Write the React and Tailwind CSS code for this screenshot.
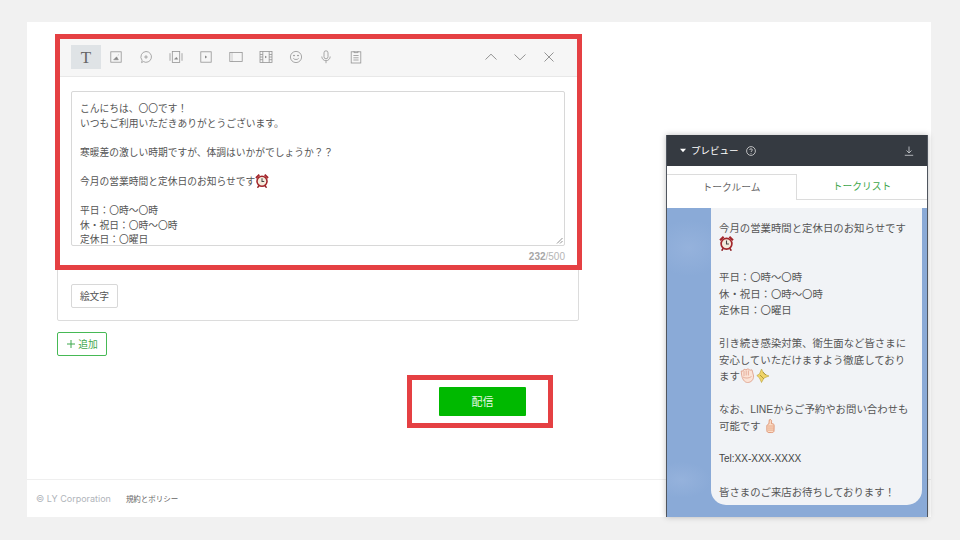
import React from "react";

function Ico({ children, size = 14 }) {
  return (
    <svg width={size} height={size} viewBox="0 0 14 14" fill="none" stroke="#949494" strokeWidth="0.8">
      {children}
    </svg>
  );
}

const tools = [
  <Ico key="1"><rect x="1.8" y="1.8" width="10.4" height="10.4" /><path d="M4.6 9.8 L7.6 6.8 L9.4 9.8Z M8.8 5.4 L9.9 4.6" fill="#888" stroke="#888" strokeWidth=".5" /></Ico>,
  <Ico key="2"><path d="M7 1.5a5.4 5.4 0 1 1-2.6 10.1L2.6 12.6l.5-2.3A5.4 5.4 0 0 1 7 1.5Z" /><path d="M7 5.2v3.6M5.2 7h3.6" /></Ico>,
  <Ico key="3"><rect x="3.3" y="1.5" width="7.4" height="11" /><path d="M1 3.2v7.6M13 3.2v7.6" /><path d="M5.4 9.3 L7.4 7.2 L8.8 9.3Z" fill="#888" stroke="#888" strokeWidth=".4" /></Ico>,
  <Ico key="4"><rect x="1.8" y="1.8" width="10.4" height="10.4" /><path d="M6 5.6 L8.2 7 L6 8.4Z" fill="#888" stroke="none" /></Ico>,
  <Ico key="5"><rect x="0.8" y="2.5" width="12.4" height="9" /><path d="M3 2.5v9" strokeDasharray="1 1" /></Ico>,
  <Ico key="6"><rect x="1" y="1.5" width="12" height="11" /><path d="M3.8 1.5v11M10.2 1.5v11M1 4.5h2.8M1 7h2.8M1 9.7h2.8M10.2 4.5H13M10.2 7H13M10.2 9.7H13" /><path d="M6 5.7 L8 7 L6 8.3Z" fill="#888" stroke="none" /></Ico>,
  <Ico key="7"><circle cx="7" cy="7" r="5.6" /><path d="M4.3 8.3c.8 1.6 4.6 1.6 5.4 0" /><circle cx="5" cy="5.6" r=".5" fill="#888" /><circle cx="9" cy="5.6" r=".5" fill="#888" /></Ico>,
  <Ico key="8"><rect x="5" y="0.8" width="4" height="8" rx="2" /><path d="M2.8 6.5a4.2 4.2 0 0 0 8.4 0M7 10.7v2.5" /></Ico>,
  <Ico key="9"><rect x="2.2" y="1.8" width="9.6" height="11.2" /><path d="M5 1v1.6h4V1M4.4 5.5h5.2M4.4 7.8h5.2M4.4 10h5.2" /></Ico>,
];

function Alarm({ size = 14 }) {
  return (
    <svg className="inline-block align-[-3px]" width={size} height={size} viewBox="1 1 12 12.5">
      <path d="M1 4 L4 1 L5.2 2.2 L2.2 5.2Z M13 4 L10 1 L8.8 2.2 L11.8 5.2Z" fill="#a3262b" />
      <path d="M3 13.3l1.2-2M11 13.3l-1.2-2" stroke="#8f2226" strokeWidth="1.3" />
      <circle cx="7" cy="7.5" r="4.5" fill="#f3ebdc" stroke="#a3262b" strokeWidth="1.4" />
      <path d="M7 4.8V7.7H9" stroke="#444" strokeWidth=".9" fill="none" />
    </svg>
  );
}

function Clap() {
  return (
    <svg className="inline-block align-[-3px]" width="15" height="15" viewBox="0 0 15 15">
      <path d="M1.5 6 L1.2 3 L3 3 L4 1.2 L6 1.8 L8 .8 L10 2.2 L12 1.8 L13.6 8 C13.6 12 11 14.5 7.5 14.5 C4.5 14.5 2 11 1.5 6Z" fill="#fbe3d6" stroke="#dd9a84" strokeWidth=".8" />
      <path d="M4 3v5M6.2 2.5v5M8.4 2.5v5M3 9c2 1.5 6 1.5 8.5-.5" stroke="#dd9a84" strokeWidth=".7" fill="none" />
    </svg>
  );
}

function Sparkle() {
  return (
    <svg className="inline-block align-[-3px] ml-[1px]" width="14" height="15" viewBox="0 0 14 15">
      <path d="M5.5 1 L8 6 L13 8 L8 10 L5.5 14.5 L3.5 10 L.8 7.5 L3.5 6Z" fill="#f0d466" stroke="#b9a13e" strokeWidth=".6" />
      <path d="M7 4 L10 7M4 7 L8 11" stroke="#a58e2d" strokeWidth=".8" />
    </svg>
  );
}

function Thumb() {
  return (
    <svg className="inline-block align-[-4px] ml-[5px]" width="9" height="16" viewBox="0 0 11 18">
      <path d="M4 1.5 C5.5 .5 7 1.5 6.8 3.2 L6.6 6 L9 6.5 C10 7 10 8 10 9 L9.8 15 C9.7 16.5 8.5 17 7 17 L3.5 17 C2 17 1 16 1 14.5 L1 9 C1 7.5 2.5 7 3.5 6.5Z" fill="#fbdcc6" stroke="#d9825c" strokeWidth=".9" />
      <path d="M2 9h7.5M2 11.5h7.5M2 14h7.5" stroke="#d9825c" strokeWidth=".7" />
    </svg>
  );
}

export default function App() {
  return (
    <div
      className="relative w-[960px] h-[540px] overflow-hidden bg-[#f1f1f1] pt-[22px] pl-[27px] text-[#555]"
      style={{ fontFamily: '"Noto Sans CJK JP", "Noto Sans", sans-serif' }}
    >
      <div className="w-[904px] h-[495px] bg-white flex flex-col">
        <main className="flex-1 pl-[30px] pt-[15px]">
          <div className="w-[522px] h-[284px] border border-[#dcdcdc] rounded-[2px]">
            <div className="h-[39px] bg-[#f6f6f6] border-b border-[#e8e8e8] flex items-center pl-[13px] pr-[23px]">
              <div className="w-[30px] h-[24px] bg-[#dfe3e6] flex items-center justify-center text-[#666] text-[17px] font-normal leading-none" style={{ fontFamily: '"Liberation Serif", serif' }}>T</div>
              {tools.map((t) => (
                <div key={t.key} className="w-[30px] h-[24px] flex items-center justify-center">{t}</div>
              ))}
              <div className="flex-1" />
              <div className="flex items-center gap-[17px]">
                <svg width="12" height="12" viewBox="0 0 12 12" fill="none" stroke="#949494"><path d="M.5 8.5 L6 3.2 L11.5 8.5" /></svg>
                <svg width="12" height="12" viewBox="0 0 12 12" fill="none" stroke="#949494"><path d="M.5 3.5 L6 8.8 L11.5 3.5" /></svg>
                <svg width="12" height="12" viewBox="0 0 12 12" fill="none" stroke="#949494"><path d="M1.5 1.5 L10.5 10.5M10.5 1.5 L1.5 10.5" /></svg>
              </div>
            </div>
            <div className="px-[13px] pt-[14px]">
              <div className="relative h-[155px] border border-[#d8d8d8] rounded-[2px] overflow-hidden px-[8px] pt-[9px] text-[9.75px] leading-[14.6px] text-[#555]">
                <div>こんにちは、〇〇です！</div>
                <div>いつもご利用いただきありがとうございます。</div>
                <div className="h-[14.6px]" />
                <div>寒暖差の激しい時期ですが、体調はいかがでしょうか？？</div>
                <div className="h-[14.6px]" />
                <div>今月の営業時間と定休日のお知らせです<Alarm /></div>
                <div className="h-[14.6px]" />
                <div>平日：〇時～〇時</div>
                <div>休・祝日：〇時～〇時</div>
                <div>定休日：〇曜日</div>
                <svg className="absolute right-[1px] bottom-[1px]" width="7" height="7" viewBox="0 0 7 7" stroke="#777" strokeWidth=".8"><path d="M1 6.5 L6.5 1M4 6.5 L6.5 4" /></svg>
              </div>
              <div className="h-[20px] flex items-center justify-end text-[10px] text-[#b5b5b5]" style={{ fontFamily: '"Liberation Sans", sans-serif' }}>
                <span className="font-bold text-[#a6a6a6]">232</span>/500
              </div>
              <div className="mt-[18px] w-[47px] h-[24px] border border-[#d8d8d8] rounded-[2px] flex items-center justify-center text-[9.75px]">絵文字</div>
            </div>
          </div>
          <div className="mt-[11px] w-[50px] h-[24px] border border-[#46b955] rounded-[2px] flex items-center justify-center gap-[2px] text-[9.75px] text-[#3fa84c]">
            <svg width="10" height="10" viewBox="0 0 10 10" stroke="#3fa84c"><path d="M5 1v8M1 5h8" /></svg>
            追加
          </div>
          <div className="mt-[31px] ml-[382px] w-[87px] h-[29px] bg-[#00b900] rounded-[1px] flex items-center justify-center text-[11px] text-[#e8f8e8]">配信</div>
        </main>
        <footer className="h-[38px] border-t border-[#efefef] flex items-center pl-[9px] gap-[15px]">
          <span className="text-[9px] text-[#b0b4ba]" style={{ fontFamily: 'Inter, sans-serif' }}>© LY Corporation</span>
          <span className="text-[7.5px] text-[#666]">規約とポリシー</span>
        </footer>
      </div>

      {/* red annotation frames */}
      <div className="absolute left-[55px] top-[34px] w-[527px] h-[236px] border-[5px] border-[#e54043] pointer-events-none" />
      <div className="absolute left-[407px] top-[375px] w-[146px] h-[53px] border-[5px] border-[#e54043] pointer-events-none" />

      {/* floating preview */}
      <aside className="absolute left-[666px] top-[135px] w-[262px] h-[382px] flex flex-col overflow-hidden border-x border-[#50565f] shadow-[0_0_6px_rgba(0,0,0,0.25)] bg-white">
        <div className="h-[31px] bg-[#353a41] flex items-center pl-[13px] pr-[13px] text-white text-[9.5px]">
          <svg width="6" height="5" viewBox="0 0 7 5" fill="#fff"><path d="M0 .5h7L3.5 4.5Z" /></svg>
          <span className="ml-[5px]">プレビュー</span>
          <svg className="ml-[7px]" width="10" height="10" viewBox="0 0 10 10" fill="none" stroke="#ddd" strokeWidth=".8"><circle cx="5" cy="5" r="4.4" /><path d="M3.7 4c0-1.7 2.6-1.7 2.6 0 0 1-1.3 1-1.3 2M5 7v.8" /></svg>
          <div className="flex-1" />
          <svg width="10" height="10" viewBox="0 0 10 10" fill="none" stroke="#cfd2d6" strokeWidth=".8"><path d="M5 .5v6.2M2.5 4.5 L5 7 L7.5 4.5M.8 9.3h8.4" /></svg>
        </div>
        <div className="h-[42px] bg-white pt-[8px]">
          <div className="h-[26px] flex text-[9.75px]">
            <div className="w-[130px] border-t border-r border-[#dcdcdc] flex items-center justify-center text-[#666]">トークルーム</div>
            <div className="flex-1 border-b border-[#dcdcdc] flex items-center justify-center text-[#3ea64b]">トークリスト</div>
          </div>
        </div>
        <div className="flex-1 pl-[44px] pr-[5px] bg-[#8aaad7] bg-[radial-gradient(ellipse_36px_28px_at_22px_40px,#95b2dc,transparent),radial-gradient(ellipse_30px_18px_at_14px_272px,#95b2dc,transparent)]">
          <div className="h-[297px] bg-[#f1f3f6] rounded-b-[15px] pl-[8px] pr-[8px] pt-[12px] text-[10.4px] leading-[16.45px] text-[#555]">
            <div>今月の営業時間と定休日のお知らせです</div>
            <div><Alarm size={15} /></div>
            <div className="h-[16.45px]" />
            <div>平日：〇時～〇時</div>
            <div>休・祝日：〇時～〇時</div>
            <div>定休日：〇曜日</div>
            <div className="h-[16.45px]" />
            <div>引き続き感染対策、衛生面など皆さまに</div>
            <div>安心していただけますよう徹底しており</div>
            <div>ます<Clap /><Sparkle /></div>
            <div className="h-[16.45px]" />
            <div>なお、<span style={{ fontFamily: '"Liberation Sans", sans-serif' }}>LINE</span>からご予約やお問い合わせも</div>
            <div>可能です<Thumb /></div>
            <div className="h-[16.45px]" />
            <div className="text-[10px] text-[#444]" style={{ fontFamily: '"Liberation Sans", sans-serif' }}>Tel:XX-XXX-XXXX</div>
            <div className="h-[16.45px]" />
            <div>皆さまのご来店お待ちしております！</div>
          </div>
        </div>
      </aside>
    </div>
  );
}
